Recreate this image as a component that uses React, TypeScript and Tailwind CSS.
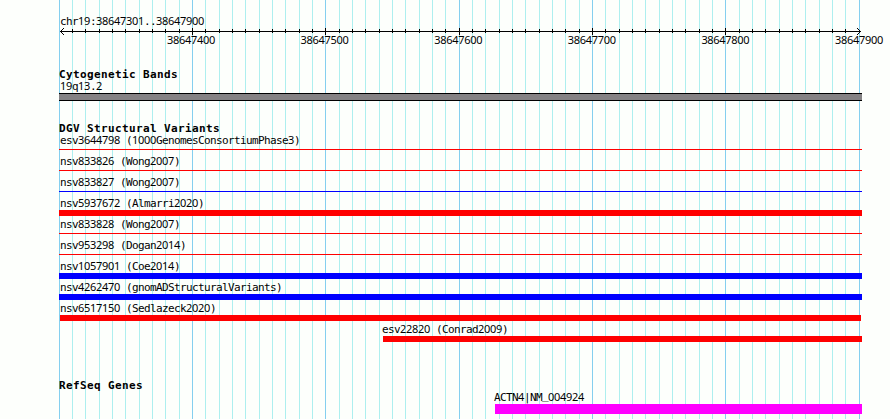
import React from "react";

const LEFT = 59;

// Pixel column of the nth grid line (one line every 10 bases).
const column = (n: number) => LEFT + Math.floor((n * 40) / 3);
const columns = Array.from({ length: 61 }, (_, n) => n);

// Fixed 6px pitch text; digits use a face whose zero has no slash,
// and underscores are lifted to sit just under the baseline.
function Fine({ text }: { text: string }) {
  return (
    <span className="block h-3 whitespace-pre font-['DejaVu_Sans_Mono',monospace] text-[11px] leading-[12px] tracking-[-0.622px] text-black">
      {text.split(/(\d+|_)/).map((part, i) => {
        if (/^\d/.test(part)) {
          return (
            <span key={i} className="font-['Noto_Sans',sans-serif] tracking-[-0.292px]">
              {part}
            </span>
          );
        }
        if (part === "_") {
          return (
            <span key={i} className="relative -top-[2px]">
              _
            </span>
          );
        }
        return part;
      })}
    </span>
  );
}

function Heading({ children }: { children: string }) {
  return (
    <h2 className="h-3 whitespace-pre font-['DejaVu_Sans_Mono',monospace] text-[11px] font-bold leading-[14px] tracking-[0.378px] text-black">
      {children}
    </h2>
  );
}

function Grid() {
  return (
    <svg className="absolute inset-0" width="890" height="419" shapeRendering="crispEdges">
      {columns.map((n) => (
        <rect
          key={n}
          x={column(n)}
          y="0"
          width="1"
          height="419"
          fill={n % 10 === 0 ? "#84cfef" : "#adefef"}
        />
      ))}
    </svg>
  );
}

function Ruler() {
  return (
    <div className="h-5">
      <svg className="block" width="890" height="8" viewBox="0 27 890 8" shapeRendering="crispEdges">
        <rect x="60" y="31" width="801" height="1" />
        {columns.slice(1, 60).map((n) =>
          n % 10 === 0 ? (
            <rect key={n} x={column(n)} y="28" width="1" height="7" />
          ) : (
            <rect key={n} x={column(n)} y="29" width="1" height="4" />
          ),
        )}
        {[1, 2, 3].map((d) => (
          <g key={d}>
            <rect x={60 + d} y={31 - d} width="1" height="1" />
            <rect x={60 + d} y={31 + d} width="1" height="1" />
            <rect x={860 - d} y={31 - d} width="1" height="1" />
            <rect x={860 - d} y={31 + d} width="1" height="1" />
          </g>
        ))}
      </svg>
      <div className="-mt-px flex h-3 justify-between pl-[167px] pr-[7px]">
        {[400, 500, 600, 700, 800, 900].map((n) => (
          <div key={n} className="w-12">
            <Fine text={`38647${n}`} />
          </div>
        ))}
      </div>
    </div>
  );
}

const variants = [
  { name: "esv3644798 (1000GenomesConsortiumPhase3)", bar: "mt-[3px] h-px w-[803px] bg-[#ff0000]" },
  { name: "nsv833826 (Wong2007)", bar: "mt-[3px] h-px w-[803px] bg-[#ff0000]" },
  { name: "nsv833827 (Wong2007)", bar: "mt-[3px] h-px w-[803px] bg-[#0000ff]" },
  { name: "nsv5937672 (Almarri2020)", bar: "mt-px h-1.5 w-[803px] bg-[#ff0000]" },
  { name: "nsv833828 (Wong2007)", bar: "mt-[3px] h-px w-[803px] bg-[#ff0000]" },
  { name: "nsv953298 (Dogan2014)", bar: "mt-[3px] h-px w-[803px] bg-[#ff0000]" },
  { name: "nsv1057901 (Coe2014)", bar: "mt-px h-1.5 w-[803px] bg-[#0000ff]" },
  { name: "nsv4262470 (gnomADStructuralVariants)", bar: "mt-px h-1.5 w-[803px] bg-[#0000ff]" },
  { name: "nsv6517150 (Sedlazeck2020)", bar: "mt-px ml-px h-1.5 w-[801px] bg-[#ff0000]" },
];

export default function App() {
  return (
    <div className="relative h-[419px] w-[890px] overflow-hidden bg-[#fdfffc]">
      <Grid />
      <main className="relative flex flex-col">
        <header className="h-[27px] pl-[60px] pt-[15px]">
          <Fine text="chr19:38647301..38647900" />
        </header>
        <Ruler />

        <section className="mt-[21px] pl-[59px]">
          <Heading>Cytogenetic Bands</Heading>
          <div className="pl-px">
            <Fine text="19q13.2" />
          </div>
          <div className="mt-px h-2 w-[803px] border-y border-black bg-[#848284]" />
        </section>

        <section className="mt-[21px] pl-[59px]">
          <Heading>DGV Structural Variants</Heading>
          {variants.map((v) => (
            <div key={v.name} className="flex h-[21px] flex-col">
              <div className="pl-px">
                <Fine text={v.name} />
              </div>
              <div className={v.bar} />
            </div>
          ))}
          <div className="h-[21px] pl-[324px]">
            <div className="-ml-px">
              <Fine text="esv22820 (Conrad2009)" />
            </div>
            <div className="mt-px h-1.5 w-[479px] bg-[#ff0000]" />
          </div>
        </section>

        <section className="mt-[35px] pl-[59px]">
          <Heading>RefSeq Genes</Heading>
          <div className="pl-[436px]">
            <div className="-ml-px">
              <Fine text="ACTN4|NM_004924" />
            </div>
            <div className="mt-px h-2.5 w-[367px] bg-[#ff00ff]" />
          </div>
        </section>
      </main>
    </div>
  );
}
